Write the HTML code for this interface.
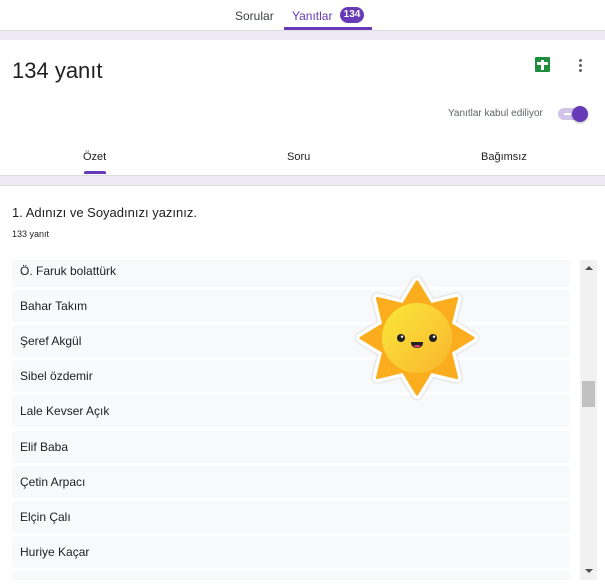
<!DOCTYPE html>
<html><head><meta charset="utf-8"><style>
*{margin:0;padding:0;box-sizing:border-box}
body{width:605px;height:588px;overflow:hidden;background:#fff;font-family:"Liberation Sans",Arial,sans-serif;color:#202124;position:relative}
.a{position:absolute}
.row{position:absolute;left:12px;width:558px;height:32px;background:#f8f9fa;border-radius:3px;font-size:12px;padding-left:8px;line-height:32px}
</style></head><body>
<div class="a" style="left:235px;top:9px;font-size:12px;color:#3c4043">Sorular</div>
<div class="a" style="left:292px;top:9px;font-size:12px;color:#673ab7">Yanıtlar</div>
<div class="a" style="left:340px;top:7px;width:24px;height:16px;border-radius:8px;background:#673ab7;color:#fff;font-size:10px;font-weight:bold;text-align:center;line-height:16px">134</div>
<div class="a" style="left:284px;top:27px;width:88px;height:3px;background:#673ab7"></div>
<div class="a" style="left:0;top:30px;width:605px;height:10px;background:#ede9f5;border-top:1px solid #ddd"></div>
<div class="a" style="left:12px;top:58px;font-size:22px;color:#202124">134 yanıt</div>
<div class="a" style="left:535px;top:57px;width:15px;height:15px;background:#1e8e3e;border-radius:1px"></div>
<div class="a" style="left:541px;top:60px;width:3px;height:10px;background:#fff"></div>
<div class="a" style="left:537px;top:62px;width:11px;height:3px;background:#fff"></div>
<div class="a" style="left:579px;top:59px;width:3px;height:3px;border-radius:2px;background:#5f6368;box-shadow:0 5px 0 #5f6368,0 10px 0 #5f6368"></div>
<div class="a" style="left:448px;top:108px;font-size:10px;color:#5f6368">Yanıtlar kabul ediliyor</div>
<div class="a" style="left:558px;top:108px;width:28px;height:12px;border-radius:6px;background:#d1c4e9"></div>
<div class="a" style="left:564px;top:113px;width:7px;height:2px;background:#fff"></div>
<div class="a" style="left:572px;top:106px;width:16px;height:16px;border-radius:8px;background:#673ab7;box-shadow:0 1px 2px rgba(0,0,0,.3)"></div>
<div class="a" style="left:83px;top:151px;font-size:11px;color:#202124">Özet</div>
<div class="a" style="left:84px;top:171px;width:22px;height:3px;background:#673ab7;border-radius:2px 2px 0 0"></div>
<div class="a" style="left:287px;top:151px;font-size:11px;color:#202124">Soru</div>
<div class="a" style="left:481px;top:151px;font-size:11px;color:#202124">Bağımsız</div>
<div class="a" style="left:0;top:175px;width:605px;height:11px;background:#ede9f5;border-top:1px solid #ddd;border-bottom:1px solid #ddd"></div>
<div class="a" style="left:12px;top:205px;font-size:13px">1. Adınızı ve Soyadınızı yazınız.</div>
<div class="a" style="left:12px;top:229px;font-size:9px">133 yanıt</div>
<div class="a" style="left:0;top:260px;width:605px;height:320px;overflow:hidden">
<div class="row" style="top:-5px">Ö. Faruk bolattürk</div>
<div class="row" style="top:30px">Bahar Takım</div>
<div class="row" style="top:65px">Şeref Akgül</div>
<div class="row" style="top:100px">Sibel özdemir</div>
<div class="row" style="top:135px">Lale Kevser Açık</div>
<div class="row" style="top:171px">Elif Baba</div>
<div class="row" style="top:206px">Çetin Arpacı</div>
<div class="row" style="top:241px">Elçin Çalı</div>
<div class="row" style="top:276px">Huriye Kaçar</div>
<div class="row" style="top:311px"></div>
<div class="a" style="left:580px;top:0;width:17px;height:320px;background:#f1f1f1"></div>
<div class="a" style="left:582px;top:121px;width:13px;height:26px;background:#c1c1c1"></div>
<div class="a" style="left:585px;top:6px;border:4px solid transparent;border-bottom:4px solid #505050;border-top:0"></div>
<div class="a" style="left:585px;top:309px;border:4px solid transparent;border-top:4px solid #505050;border-bottom:0"></div>
</div>
<svg class="a" style="left:352px;top:273px" width="130" height="130" viewBox="-65 -65 130 130">
<defs><linearGradient id="g" x1="0" y1="0" x2="1" y2="1"><stop offset="0" stop-color="#fbe83a"/><stop offset="1" stop-color="#f9b52e"/></linearGradient></defs>
<polygon points="0,-56 13.8,-33.3 39.6,-39.6 33.3,-13.8 56,0 33.3,13.8 39.6,39.6 13.8,33.3 0,56 -13.8,33.3 -39.6,39.6 -33.3,13.8 -56,0 -33.3,-13.8 -39.6,-39.6 -13.8,-33.3" fill="#fff" stroke="#fff" stroke-width="10" stroke-linejoin="round" style="filter:drop-shadow(0 0 1px #bbb)"/>
<polygon points="0,-56 13.8,-33.3 39.6,-39.6 33.3,-13.8 56,0 33.3,13.8 39.6,39.6 13.8,33.3 0,56 -13.8,33.3 -39.6,39.6 -33.3,13.8 -56,0 -33.3,-13.8 -39.6,-39.6 -13.8,-33.3" fill="#fbad1e" stroke="#fbad1e" stroke-width="3" stroke-linejoin="round"/>
<circle r="35" fill="url(#g)"/>
<circle cx="-16" cy="0" r="4" fill="#222"/><circle cx="16" cy="0" r="4" fill="#222"/>
<circle cx="-15" cy="-1.3" r="1.2" fill="#fff"/><circle cx="17" cy="-1.3" r="1.2" fill="#fff"/>
<path d="M-6,4 H6 Q6,10 0,10 Q-6,10 -6,4Z" fill="#222"/><path d="M-4,8 Q0,11 4,8 Q0,6 -4,8Z" fill="#e8407a"/>
</svg>
</body></html>
